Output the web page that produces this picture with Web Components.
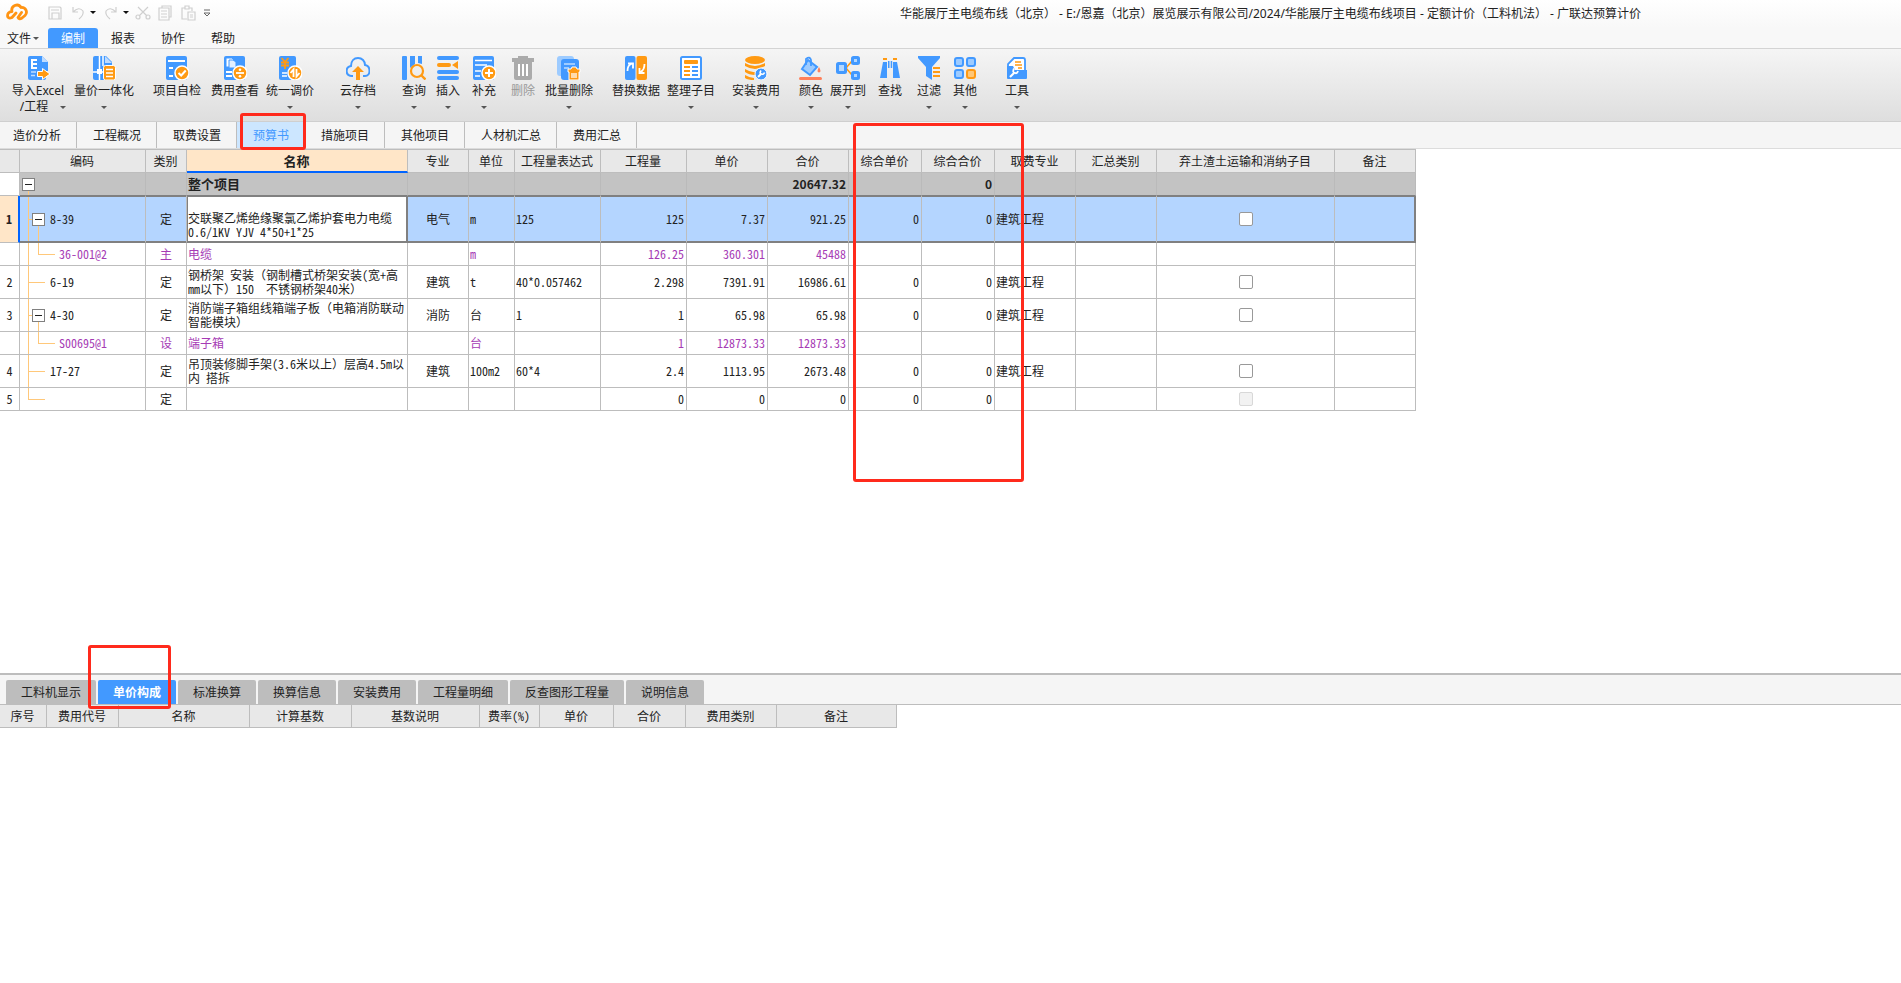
<!DOCTYPE html>
<html lang="zh-CN">
<head>
<meta charset="utf-8">
<title>广联达预算计价</title>
<style>
html,body{margin:0;height:100%}
body{font:12px/16px "Noto Sans","Noto Sans CJK SC",sans-serif;color:#222;background:#fff}
</style>
</head>
<body>
<budget-app></budget-app>
<script>
const define=(name,css,html,setup)=>customElements.define(name,class extends HTMLElement{
  connectedCallback(){
    if(this.shadowRoot)return;
    const t=document.createElement('template');
    t.innerHTML='<style>'+css+'</style>'+(typeof html==='function'?html(this):html);
    this.attachShadow({mode:'open'}).append(t.content.cloneNode(true));
    if(setup)setup(this);
  }
});
const B='#4299ff',O='#ff9a13';
const page='<path fill="'+B+'" d="M4 0h12l6 6v9H2V2q0-2 2-2z"/><path fill="'+B+'" d="M2 14h18v8q0 2-2 2H4q-2 0-2-2z"/><path fill="#bfdcff" d="M16 0l6 6h-6z"/>';
const card='<rect x="1" y="0" width="21" height="24" rx="2" fill="'+B+'"/>';
const badge='<circle cx="17" cy="17" r="7" fill="'+O+'" stroke="#fff" stroke-width="1.5"/>';
const icons={
 import:page+'<path fill="none" stroke="#fff" stroke-width="2" d="M11 4H6v8h5M6 8h5"/><path stroke="#bfdcff" stroke-width="1.6" d="M5 16h5M5 19.500h4"/><path fill="'+O+'" stroke="#fff" d="M11.500 15.500h5v-3l7.500 5.500-7.500 5.500v-3h-5z"/>',
 unify:'<path fill="'+B+'" d="M3 0h11l6 6v18H3q-2 0-2-2V2q0-2 2-2z"/><path stroke="#fff" stroke-width="1.500" d="M7.500 0v24M1 16h12M11 0v10"/><path fill="#bfdcff" d="M13 0l7 7h-7z"/><rect x="5" y="13" width="5" height="5" fill="#fff"/><rect x="11.500" y="9.500" width="12" height="14.500" rx="2" fill="'+O+'" stroke="#fff"/><path stroke="#fff" stroke-width="1.600" d="M14 13.500h7M14 17h7M14 20.500h7"/>',
 check:card+'<path stroke="#fff" stroke-width="2" d="M3 5h17M4 12h4M4 20h4"/>'+badge+'<path fill="none" stroke="#fff" stroke-width="2" d="M13.500 17l2.700 2.500 4.500-5"/>',
 fee:card+'<path fill="#fff" stroke="'+B+'" d="M3 2h6l3 3v6H3z"/><path fill="#e4f0ff" stroke="'+B+'" d="M6 4h4l3 2v6H6z"/><path stroke="#fff" stroke-width="2" d="M3 16h6M3 20h6"/>'+badge+'<path stroke="#fff" stroke-width="1.800" d="M13 17h8"/><circle cx="17" cy="13.800" r="1.300" fill="#fff"/><circle cx="17" cy="20.200" r="1.300" fill="#fff"/>',
 price:'<rect x="1" y="0" width="17" height="24" rx="2" fill="'+B+'"/><path fill="none" stroke="'+O+'" stroke-width="1.800" d="M3.500 2l3.500 4 3.500-4M3 6.500h8M3 9.500h8M7 6v7"/><path stroke="#fff" stroke-width="1.500" d="M4 17h5M4 20h5"/>'+badge+'<path fill="none" stroke="#fff" stroke-width="1.800" d="M12.500 17l3-3.500V21M18.500 13v7.500l3-3.500"/>',
 cloud:'<path fill="none" stroke="'+B+'" stroke-width="2" d="M7 20H6C-1 20-1 11 5 10 5 5 8 2 12 2s7 3 7 7c6 1 6 11 0 11h-2"/><path fill="'+O+'" d="M12 10l6 6h-4v8h-4v-8H6z"/>',
 query:'<path fill="'+B+'" d="M0 1q0-1 1-1h3q1 0 1 1v22q0 1-1 1H1q-1 0-1-1zM8 0h5v8l-5 4zM16 0h4v8l-4-1z"/><circle cx="15" cy="15" r="6" fill="none" stroke="'+O+'" stroke-width="2.200"/><path stroke="'+O+'" stroke-width="2.400" d="M19 19l4.500 4.500"/>',
 insert:'<g fill="'+B+'"><rect x="1" y="0" width="22" height="4" rx="2"/><rect x="1" y="14" width="22" height="4" rx="2"/><rect x="1" y="20" width="22" height="4" rx="2"/></g><rect x="1" y="7" width="14" height="4" rx="2" fill="'+O+'"/><path fill="'+O+'" d="M16 9l6-4v8z"/>',
 add:card+'<path stroke="#fff" stroke-width="1.600" d="M3 4.500h17M3 9h12M3 15h6M3 20h5"/>'+badge+'<path stroke="#fff" stroke-width="2" d="M17 13v8M13 17h8"/>',
 remove:'<g fill="#ababab"><path d="M7 0h10v2h6v4H1V2h6z"/><path d="M3 6h18v16q0 2-2 2H5q-2 0-2-2z"/></g><path stroke="#fff" stroke-width="2" d="M8 8v12M12 8v12M16 8v12"/>',
 batch:'<rect x="0" y="0" width="17" height="20" rx="3" fill="#9dcbff"/><rect x="4" y="3" width="18" height="21" rx="3" fill="'+B+'"/><path stroke="#9dcbff" stroke-width="2" d="M7 8h11M7 12h5"/><path fill="'+O+'" stroke="#fff" d="M11 13h3l1-2h4l1 2h3v3h-1v8H12v-8h-1z"/><path stroke="#fff" stroke-width="1.300" d="M15 17v5M17 17v5M19 17v5"/>',
 swap:'<rect x="1" width="10.500" height="24" rx="2" fill="'+B+'"/><rect x="12.500" width="10.500" height="24" rx="2" fill="'+O+'"/><path fill="none" stroke="#fff" stroke-width="1.800" d="M3.500 15q0-6 4-7M4 7.500h5v5M20.500 8q0 6-4 8M15.500 12v5h5"/>',
 sort:'<rect x="2" y="1" width="20" height="22" rx="1.500" fill="#fff" stroke="'+B+'" stroke-width="2"/><rect x="5" y="4" width="14" height="4" rx="1" fill="'+O+'"/><path stroke="'+O+'" stroke-width="1.800" d="M5 11h6M5 15h6M5 19h6"/><path stroke="'+B+'" stroke-width="1.800" d="M13 11h6M13 15h6M13 19h6"/>',
 install:'<g fill="'+O+'"><ellipse cx="11" cy="4" rx="10" ry="4"/><path d="M1 7q10 6 20 0v3q-10 6-20 0zM1 13q8 5 14 2l-4 4q-6 0-10-3zM1 19q5 3 9 3v2Q4 24 1 22z"/></g><circle cx="17" cy="18" r="6" fill="'+B+'" stroke="#fff"/><path stroke="#fff" stroke-width="2" d="M14 21l3-3"/><path fill="none" stroke="#fff" stroke-width="1.600" d="M17 14.500q-2 3 .5 3.500 2 1 3-1.500"/>',
 color:'<path fill="#9dcbff" stroke="'+B+'" stroke-width="2" d="M9 4l9 7-7 8-8-6z"/><path fill="none" stroke="'+B+'" stroke-width="1.800" d="M7 9V3q4-3 5 1v6"/><path fill="#ff805a" d="M20 11q3 5 0 5.500-3-.5 0-5.500z"/><rect x="0" y="21" width="23" height="3" rx="1.500" fill="#ff805a"/>',
 expand:'<path fill="none" stroke="'+O+'" stroke-width="1.600" d="M10 12l6-7M10 12l6 7"/><g fill="#b5d8ff" stroke="'+B+'" stroke-width="3"><rect x="1.500" y="7.500" width="8" height="9" rx="1"/><rect x="16.500" y="1.500" width="6" height="6" rx="1"/><rect x="16.500" y="16.500" width="6" height="6" rx="1"/></g>',
 find:'<g fill="'+B+'"><path d="M5 6h4v16H2L5 6zM15 6h4l3 16h-7z"/><path d="M10 5h1.500v7H10zM12.700 5h1.500v7h-1.500z"/></g><path fill="'+O+'" d="M5 2h4v2H5zM15 2h4v2h-4z"/>',
 filter:'<path fill="'+B+'" d="M1 0h22v2l-8 9v13l-6-4v-9L1 2z"/><path stroke="'+O+'" stroke-width="1.800" d="M16 12h7M16 16h7M16 20h7"/>',
 other:'<g fill="#9dcbff" stroke="'+B+'" stroke-width="2"><rect x="2" y="2" width="8" height="8" rx="2"/><rect x="14" y="2" width="8" height="8" rx="2"/><rect x="2" y="14" width="8" height="8" rx="2"/></g><rect x="14" y="14" width="8" height="8" rx="2" fill="#ffc777" stroke="'+O+'" stroke-width="2"/>',
 tool:'<path fill="#fff" stroke="'+B+'" stroke-width="1.800" d="M3 14V8l6-6h9q2 0 2 2v10"/><path stroke="'+O+'" stroke-width="1.600" d="M10 6h6M10 9h7M13 12h4"/><path fill="'+B+'" d="M2 10h6l2 4h12v8q0 1-1 1H3q-1 0-1-1z"/><path stroke="#fff" stroke-width="2.200" d="M5 21l4-4"/><path fill="none" stroke="#fff" stroke-width="1.800" d="M9 12.500q-2 4 1 4.500 2 1 3-2"/>'
};

define('ribbon-button',`
:host{display:block;flex:none}
button{display:flex;flex-direction:column;align-items:center;width:100%;height:72px;padding:7px 0 0;border:0;background:none;font:inherit;line-height:16px;color:#222;white-space:nowrap}
button:disabled{color:#999}
svg{display:block;flex:none;margin-bottom:3px}
.second{display:flex;align-items:center;justify-content:center;height:16px}
.second.text{gap:12px;padding-left:10px}
i{border:solid transparent;border-width:3px 3px 0;border-top-color:#555}
`,el=>`<button type="button" ${el.hasAttribute('disabled')?'disabled':''}><svg width="24" height="24" viewBox="0 0 24 24">${icons[el.getAttribute('icon')]}</svg><span><slot></slot></span>${
 el.hasAttribute('second')?`<span class="second text">${el.getAttribute('second')}<i></i></span>`:el.hasAttribute('menu')?'<span class="second"><i></i></span>':''}</button>`);

const quick=(label,d)=>`<button type="button" aria-label="${label}"><svg width="16" height="16" viewBox="0 0 16 16" fill="none" stroke="#cfcfcf" stroke-width="1.2">${d}</svg></button>`;
define('title-bar',`
:host{display:flex;height:28px;align-items:center;padding-left:6px;position:relative;background:linear-gradient(#fff,#f8f8f8)}
.logo{width:22px;height:18px;margin:0 19px 4px 0}
nav{display:flex;align-items:center;gap:7px;height:26px;margin-bottom:3px}
button{border:0;background:none;padding:0;width:16px;height:16px;display:block}
button[aria-label="复制"],button[aria-label="剪切"]{margin-left:-1px}
i{border:solid transparent;border-width:3px 3px 0;border-top-color:#111;margin-left:-3px}
.more{width:8px}
h1{position:absolute;left:900px;top:6px;margin:0;font:inherit;white-space:pre}
`,`<svg class="logo" viewBox="0 0 22 18" fill="none" stroke="#ff9413" stroke-width="2.800" stroke-linecap="round" stroke-linejoin="round"><path d="M10 10l-4 4.500q-3 1.500-4.300-.8Q.8 9 6 8.500C4.500 3 12-.5 15 4.500c5-.5 7 5 4 8l-3 2.500q-3 2-4-.5l3.500-5"/></svg>
<nav>${quick('保存','<path d="M2 2h11l1 1v11H2zM5 14V8h7v6M4 5h8"/>')}
${quick('撤销','<path d="M3 2v5h5M3 7q6-6 10-1 1 4-4 8"/>')}<i></i>
${quick('重做','<path d="M13 2v5H8M13 7Q7 1 3 6q-1 4 4 8"/>')}<i></i>
${quick('剪切','<path d="M3 2l9 9M13 2l-9 9"/><circle cx="3" cy="12" r="2"/><circle cx="13" cy="12" r="2"/>')}
${quick('复制','<path d="M5 3V1h9v11h-2M2 3h10v12H2zM4 6h6M4 9h6M4 12h6"/>')}
${quick('粘贴','<path d="M7 14H2V3h3M9 3h3v3M5 1h4v3H5zM8 7h7v8H8zM10 10h3M10 12h3"/>')}
<button type="button" class="more" aria-label="自定义"><svg width="8" height="8" viewBox="0 0 8 8" fill="none" stroke="#666"><path d="M1 1h6M1 4h6L4 7z"/></svg></button></nav>
<h1><slot></slot></h1>`);

define('menu-bar',`
:host{display:flex;height:20px;background:#f8f8f8;border-bottom:1px solid #d4d4d4}
button{width:50px;border:0;padding:1px 0 0;background:none;font:inherit;line-height:19px;color:#222}
.file{width:48px;display:flex;align-items:center;gap:2px;padding-left:7px}
.file i{border:solid transparent;border-width:3px 3px 0;border-top-color:#555}
.on{background:${B};color:#fff;border-radius:3px 3px 0 0}
`,`<button class="file" type="button">文件<i></i></button><button class="on" type="button">编制</button><button type="button">报表</button><button type="button">协作</button><button type="button">帮助</button>`);

const tools=[
['导入Excel','import',12,'second="/工程"',52],['量价一体化','unify',10,'menu'],['项目自检','check',19,''],['费用查看','fee',10,''],['统一调价','price',7,'menu'],
['云存档','cloud',26,'menu'],['查询','query',26,'menu'],['插入','insert',10,'menu'],['补充','add',12,'menu'],['删除','remove',15,'disabled'],['批量删除','batch',10,'menu'],
['替换数据','swap',19,''],['整理子目','sort',7,'menu'],['安装费用','install',17,'menu'],['颜色','color',19,'menu'],['展开到','expand',7,'menu'],['查找','find',12,''],
['过滤','filter',15,'menu'],['其他','other',12,'menu'],['工具','tool',28,'menu']];
define('tool-ribbon',`
:host{display:flex;height:72px;background:linear-gradient(#f5f5f5,#dedede);border-bottom:1px solid #cfcfcf}
`,tools.map(([t,ic,gap,extra,w])=>`<ribbon-button icon="${ic}" ${extra} style="margin-left:${gap}px;width:${w||t.length*12}px">${t}</ribbon-button>`).join(''));

define('page-tabs',`
:host{display:flex;height:26px;background:#f5f5f5;border-bottom:1px solid #dcdcdc}
button{border:0;border-right:1px solid #bdbdbd;padding:2px 15px 0 16px;background:none;font:inherit;color:#222;white-space:nowrap}
button:first-of-type{padding-left:13px}
.on{background:#cce6ff;color:${B};border-color:transparent}
`,['造价分析','工程概况','取费设置','预算书','措施项目','其他项目','人材机汇总','费用汇总'].map(t=>`<button type="button" ${t==='预算书'?'class="on"':''}>${t}</button>`).join(''));

define('detail-tabs',`
:host{display:flex;gap:2px;height:24px;padding:5px 6px 0;background:#f5f5f5;border-top:2px solid #bdbdbd;border-bottom:1px solid #bdbdbd}
button{border:0;padding:2px 15px 0;background:#bdbdbd;font:inherit;color:#222;border-radius:2px 2px 0 0;white-space:nowrap}
.on{background:${B};color:#fff;font-weight:bold}
`,['工料机显示','单价构成','标准换算','换算信息','安装费用','工程量明细','反查图形工程量','说明信息'].map(t=>`<button type="button" ${t==='单价构成'?'class="on"':''}>${t}</button>`).join(''));

const gridCss=`
:host{display:block;font:12px/14px "Noto Sans Mono CJK SC","Noto Sans CJK SC",sans-serif}
table{table-layout:fixed;border-collapse:separate;border-spacing:0}
th,td{box-sizing:border-box;height:23px;padding:0 2px 0 1px;border:solid #bdbdbd;border-width:0 1px 1px 0;white-space:pre;overflow:hidden}
thead th{background:#e8e8e8;font-weight:normal;text-align:center;padding:0 1px 0 0}
`;
const cols=ws=>'<colgroup>'+ws.map(w=>`<col style="width:${w}px">`).join('')+'</colgroup>';
const names=['','编码','类别','名称','专业','单位','工程量表达式','工程量','单价','合价','综合单价','综合合价','取费专业','汇总类别','弃土渣土运输和消纳子目','备注'];
const widths=[20,126,41,221,61,46,86,86,81,81,73,73,81,81,178,81];
const rows=[
['root','','','','整个项目','','','','','','20647.32','','0','',null],
['sel tall node','1','8-39','定','交联聚乙烯绝缘聚氯乙烯护套电力电缆\n0.6/1KV YJV 4*50+1*25','电气','m','125','125','7.37','921.25','0','0','建筑工程',true],
['sub','','36-001@2','主','电缆','','m','','126.25','360.301','45488','','','',null],
['leaf two','2','6-19','定','钢桥架 安装（钢制槽式桥架安装(宽+高\nmm以下）150  不锈钢桥架40米）','建筑','t','40*0.057462','2.298','7391.91','16986.61','0','0','建筑工程',true],
['node two','3','4-30','定','消防端子箱组线箱端子板（电箱消防联动\n智能模块）','消防','台','1','1','65.98','65.98','0','0','建筑工程',true],
['sub','','S00695@1','设','端子箱','','台','','1','12873.33','12873.33','','','',null],
['leaf two','4','17-27','定','吊顶装修脚手架(3.6米以上）层高4.5m以\n内 搭拆','建筑','100m2','60*4','2.4','1113.95','2673.48','0','0','建筑工程',true],
['leaf last','5','','定','','','','','0','0','0','0','0','',false]];
define('budget-grid',gridCss+`
table{width:1416px;border-top:1px solid #bdbdbd}
thead th.cur{background:#ffe6c8;font-size:13px;font-weight:bold;border-bottom:2px solid #0064ff}
tbody th{padding:0;text-align:center;font-weight:normal}
td.c{text-align:center;padding-left:2px}.r{text-align:right}
.two td,.two th{height:33px}.tall td,.tall th{height:47px}
.root td{background-color:#c3c3c3;border-bottom-color:#808080;font-weight:bold;font-family:"Noto Sans CJK SC",sans-serif;border-right-color:#bababa}
.root td.name{font-size:13px}
.sub td{color:#a63bb5}
.sel td{background-color:#b4d5ff;border-bottom-color:#808080;box-shadow:inset 0 1px #808080,inset 0 -1px #808080}
.sel td.name{background:#fff;padding-top:12px;border-right-color:#808080;box-shadow:inset 0 0 0 1px #808080}
.sel td:last-child{border-right-color:#808080;box-shadow:inset -1px 1px #808080,inset 0 -1px #808080}
.sel th{background:#ffe6c8;font-weight:bold;border-right:2px solid #0064ff}
.code{--l:linear-gradient(#ffc87a,#ffc87a);background-repeat:no-repeat;padding-left:30px}
.root .code{padding-left:2px;background-image:var(--l);background-size:1px 4px;background-position:8px 100%}
.node .code{padding-left:12px;background-image:var(--l),var(--l),var(--l);background-size:1px 100%,4px 1px,1px 50%;background-position:8px 0,8px 50%,18px 100%}
.sub .code{padding-left:39px;background-image:var(--l),var(--l),var(--l);background-size:1px 100%,1px 50%,17px 1px;background-position:8px 0,18px 0,18px 50%}
.leaf .code{background-image:var(--l),var(--l);background-size:1px 100%,17px 1px;background-position:8px 0,8px 50%}
.last .code{background-size:1px 50%,17px 1px}
.line{display:flex;align-items:center;gap:5px}
.line button{box-sizing:border-box;width:13px;height:13px;border:1px solid #808080;background:linear-gradient(#222,#222) center/7px 1px no-repeat #fff;padding:0}
input{appearance:none;box-sizing:border-box;display:block;width:14px;height:14px;margin:0 auto;border:1px solid #999;border-radius:2px;background:#fff}
input:disabled{background:#f2f2f2;border-color:#d8d8d8}
`,`<table>${cols(widths)}<thead><tr>${names.map((n,i)=>`<th scope="col" ${i===3?'class="cur"':''}>${n}</th>`).join('')}</tr></thead><tbody>${
rows.map(r=>{const[k,no,code,cat,name,major,unit,expr,qty,price,total,cp,ct,fee,chk]=r;
const box=/root|node/.test(k)?'<button type="button" aria-label="折叠"></button>':'';
return `<tr class="${k}"><th scope="row">${no}</th><td class="code"><div class="line">${box}<span>${code}</span></div></td><td class="c">${cat}</td><td class="name">${name}</td><td class="c">${major}</td><td>${unit}</td><td>${expr}</td>${[qty,price,total,cp,ct].map(v=>`<td class="r">${v}</td>`).join('')}<td>${fee}</td><td></td><td class="c">${chk===null?'':`<input type="checkbox" aria-label="弃土渣土运输和消纳子目" ${chk?'':'disabled'}>`}</td><td></td></tr>`}).join('')}</tbody></table>`);

const feeCols=[['序号',47],['费用代号',72],['名称',131],['计算基数',102],['基数说明',128],['费率(%)',60],['单价',74],['合价',72],['费用类别',91],['备注',120]];
define('fee-grid',gridCss+'table{width:897px}',`<table>${cols(feeCols.map(c=>c[1]))}<thead><tr>${feeCols.map(c=>`<th scope="col">${c[0]}</th>`).join('')}</tr></thead></table>`);

define('mark-box',':host{display:block;position:absolute;box-sizing:border-box;border:3px solid #ff2a1c;border-radius:3px;pointer-events:none}','');

define('budget-app',`
:host{display:flex;flex-direction:column;min-height:100vh;overflow:hidden}
main{flex:1;position:relative;display:flex;flex-direction:column}
.lower{flex:0 0 310px;position:relative}
.m1{left:240px;top:-9px;width:66px;height:37px}
.m2{left:853px;top:1px;width:171px;height:359px}
.m3{left:88px;top:-28px;width:83px;height:64px}
`,`<title-bar>华能展厅主电缆布线（北京） - E:/恩嘉（北京）展览展示有限公司/2024/华能展厅主电缆布线项目 - 定额计价（工料机法） - 广联达预算计价</title-bar>
<menu-bar></menu-bar><tool-ribbon></tool-ribbon>
<main><page-tabs></page-tabs><budget-grid></budget-grid><mark-box class="m1"></mark-box><mark-box class="m2"></mark-box></main>
<section class="lower"><detail-tabs></detail-tabs><fee-grid></fee-grid><mark-box class="m3"></mark-box></section>`);
</script>
</body>
</html>
